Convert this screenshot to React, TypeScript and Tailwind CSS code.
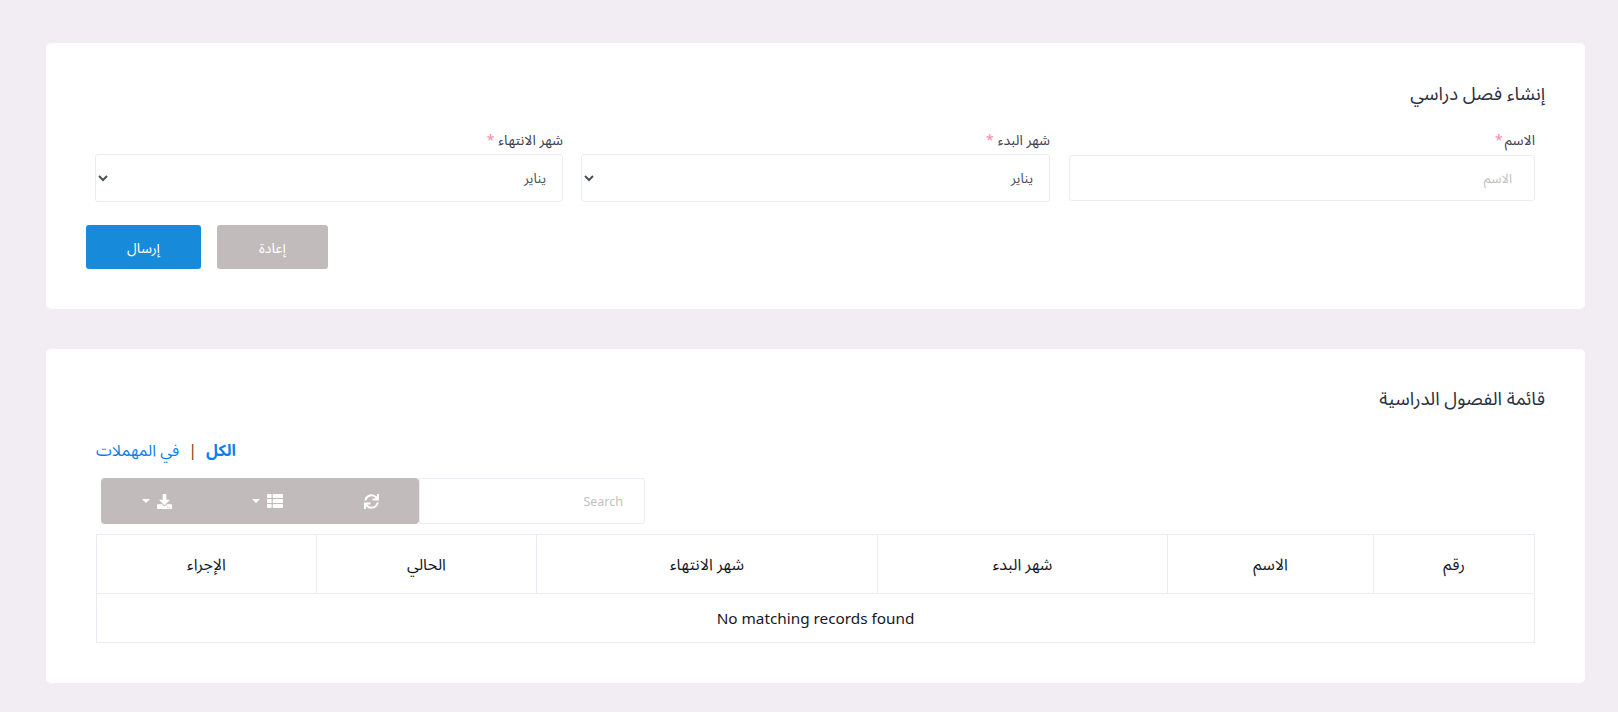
import type { ReactNode } from "react";
import { FaDownload, FaSync, FaThList } from "react-icons/fa";

const font = "font-['Noto_Sans','Noto_Sans_Arabic',sans-serif]";

function Caret() {
  return <span className="inline-block w-0 h-0 border-x-[4px] border-x-transparent border-t-[4px] border-t-white" />;
}

function Field({ label, gap, children }: { label: string; gap?: boolean; children: ReactNode }) {
  return (
    <div className="flex flex-col">
      <label className="text-[14px] leading-[20px] text-[#3f4254] mb-[5px] h-[20px]">
        {label}
        <span className={gap ? "text-[#f58ba6] mr-[4px]" : "text-[#f58ba6] mr-[2px]"}>*</span>
      </label>
      {children}
    </div>
  );
}

function Select() {
  return (
    <select
      defaultValue="1"
      className="w-full h-[48px] -mt-[1px] pr-[12px] pl-0 bg-white border border-[#ecebf3] rounded-[3px] text-[13.5px] text-[#495057] outline-none"
    >
      <option value="1">يناير</option>
    </select>
  );
}

const columns = [
  { label: "رقم", w: "w-[161px]" },
  { label: "الاسم", w: "w-[206px]" },
  { label: "شهر البدء", w: "w-[290px]" },
  { label: "شهر الانتهاء", w: "w-[341px]" },
  { label: "الحالي", w: "w-[220px]" },
  { label: "الإجراء", w: "w-[220px]" },
];

export default function App() {
  return (
    <div dir="rtl" className={`${font} min-h-[712px] bg-[#f1edf3] pr-[33px] pl-[46px] pt-[43px] text-[#212529]`}>
      <section className="bg-white rounded-[5px] h-[266px] pt-[38px] px-[40px]">
        <h2 className="text-[18.5px] leading-[24px] font-normal text-[#2b2f3f] mb-[25px]">إنشاء فصل دراسي</h2>
        <div className="grid grid-cols-[467px_469px_468px] gap-x-[18px] pr-[10px]">
          <Field label="الاسم">
            <input
              placeholder="الاسم"
              className="w-[466px] h-[46px] px-[22px] bg-white border border-[#ecebf3] rounded-[3px] text-[13px] outline-none placeholder:text-[#c4c0c0]"
            />
          </Field>
          <Field label="شهر البدء" gap>
            <Select />
          </Field>
          <Field label="شهر الانتهاء" gap>
            <Select />
          </Field>
        </div>
        <div className="flex justify-end gap-[16px] mt-[23px]">
          <button className="w-[111px] h-[44px] rounded-[3px] bg-[#c1bbbb] text-white text-[14px]">إعادة</button>
          <button className="w-[115px] h-[44px] rounded-[3px] bg-[#178bda] text-white text-[14px]">إرسال</button>
        </div>
      </section>

      <section className="bg-white rounded-[5px] h-[334px] mt-[40px] pt-[37px] pr-[50px] pl-[50px]">
        <h2 className="text-[18.5px] leading-[24px] font-normal text-[#2b2f3f] mb-[28px] -mr-[10px]">قائمة الفصول الدراسية</h2>
        <div className="flex items-center justify-end h-[24px] text-[16px] text-[#0b7ff0]">
          <span className="font-bold">الكل</span>
          <span className="mx-[9px] text-[#7a3b1a]">|</span>
          <span>في المهملات</span>
        </div>
        <div className="flex justify-end pl-[5px] mt-[16px] mb-[10px]">
          <input
            placeholder="Search"
            className="w-[226px] h-[46px] px-[21px] bg-white border border-[#ecebf3] rounded-r-[3px] text-[12.5px] outline-none placeholder:text-[#c4c0c0]"
          />
          <div className="flex w-[318px] h-[46px] bg-[#c1bbbb] rounded-[4px] text-white">
            <button className="w-[96px] flex items-center justify-center pt-[1px]">
              <FaSync className="text-[15px]" />
            </button>
            <button className="w-[111px] flex items-center justify-center gap-[7px]">
              <FaThList className="text-[16px]" />
              <Caret />
            </button>
            <button className="w-[111px] flex items-center justify-center gap-[7px]">
              <FaDownload className="text-[15px]" />
              <Caret />
            </button>
          </div>
        </div>
        <table className="w-full table-fixed border-collapse text-[#16181d]">
          <thead>
            <tr>
              {columns.map((c) => (
                <th key={c.label} className={`${c.w} h-[59px] border border-[#ecebf3] text-[16px] font-normal text-center`}>
                  {c.label}
                </th>
              ))}
            </tr>
          </thead>
          <tbody>
            <tr>
              <td colSpan={6} dir="ltr" className="h-[49px] border border-[#ecebf3] text-[15.3px] text-center">
                No matching records found
              </td>
            </tr>
          </tbody>
        </table>
      </section>
    </div>
  );
}
